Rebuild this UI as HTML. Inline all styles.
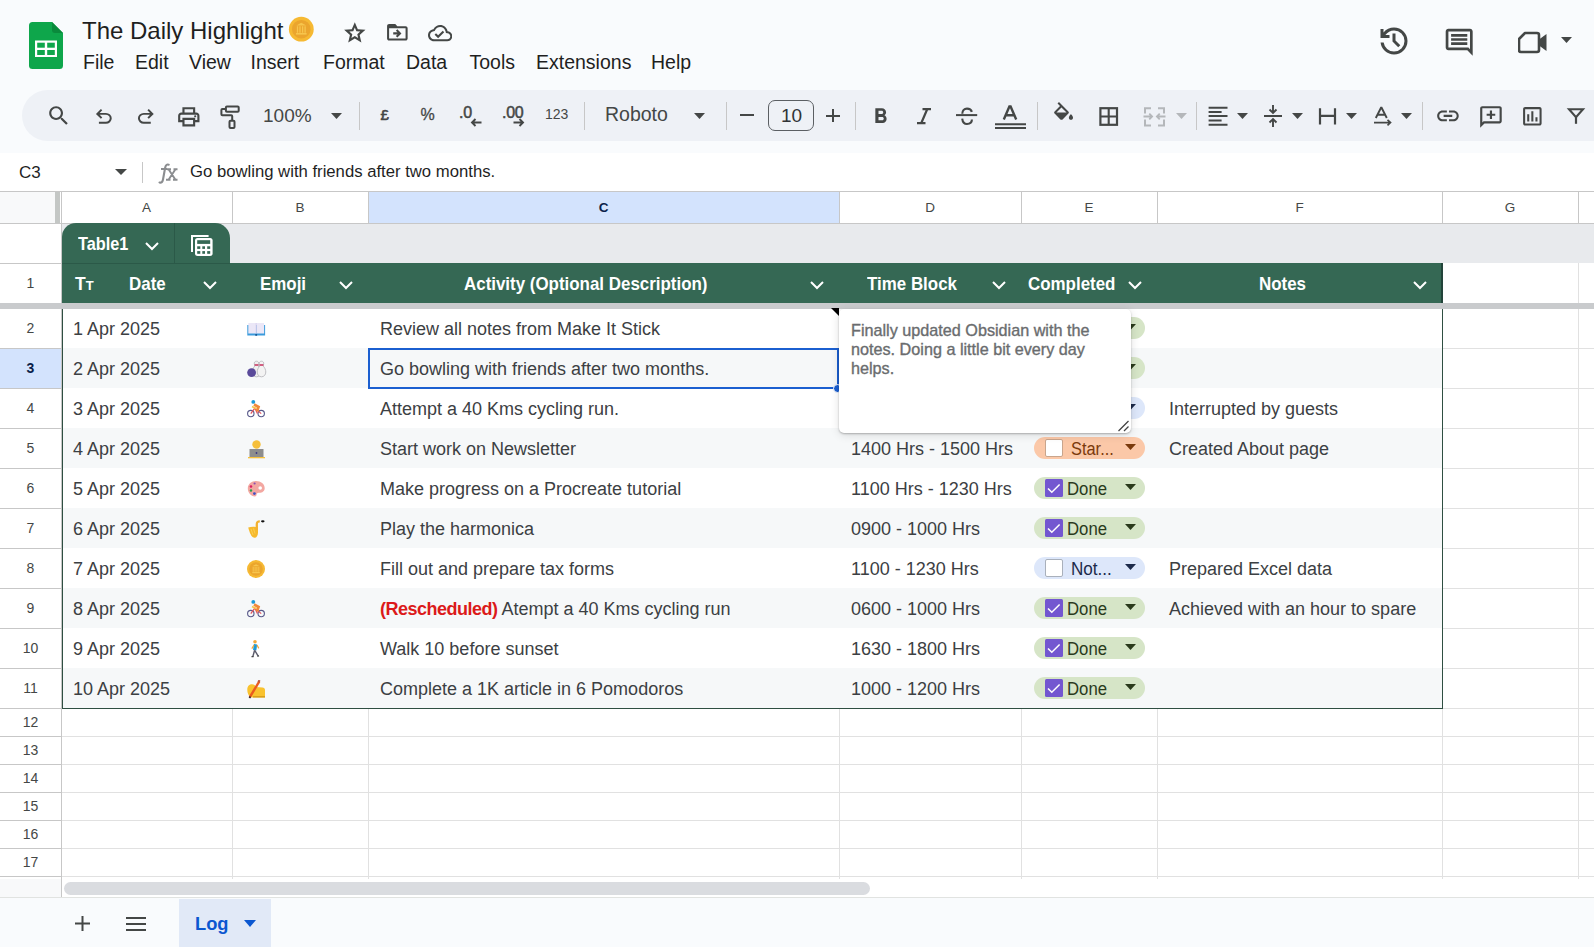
<!DOCTYPE html><html><head><meta charset="utf-8"><style>
html,body{margin:0;padding:0;}
body{width:1594px;height:947px;overflow:hidden;position:relative;background:#f9fbfd;font-family:"Liberation Sans", sans-serif;}
.t{position:absolute;white-space:nowrap;line-height:1;}
.a{position:absolute;}
</style></head><body>
<svg style="position:absolute;left:29px;top:22px" width="34" height="47" viewBox="0 0 34 47" >
<path d="M0 3.5 Q0 0 3.5 0 H23 L34 11 V43.5 Q34 47 30.5 47 H3.5 Q0 47 0 43.5 Z" fill="#0ea64b"/>
<path d="M23 0 L34 11 H26 Q23 11 23 8 Z" fill="#0a8a3c"/>
<rect x="6" y="18.5" width="22" height="16.5" fill="#fff"/>
<rect x="8.2" y="20.7" width="7.6" height="5" fill="#0ea64b"/>
<rect x="18.2" y="20.7" width="7.6" height="5" fill="#0ea64b"/>
<rect x="8.2" y="28" width="7.6" height="5" fill="#0ea64b"/>
<rect x="18.2" y="28" width="7.6" height="5" fill="#0ea64b"/>
</svg>
<div class="t" style="left:82px;top:19px;font-size:24px;color:#1f1f1f;font-weight:400;">The Daily Highlight</div>
<svg style="position:absolute;left:288px;top:16px" width="26" height="26" viewBox="0 0 26 26" ><circle cx="13.3" cy="13.2" r="12.4" fill="#f6b933"/><circle cx="13.3" cy="13.2" r="9.3" fill="#eba52d"/>
<path d="M8.3 9.5L13.3 6.8 18.3 9.5z" fill="#f7c54d"/><path d="M9.5 10.2v6.5M12 10.2v6.5M14.6 10.2v6.5M17.1 10.2v6.5" stroke="#f7c54d" stroke-width="1.3"/><rect x="8" y="17" width="10.6" height="1.6" fill="#f7c54d"/></svg>
<svg style="position:absolute;left:341.7px;top:20.3px" width="25.6" height="25.6" viewBox="0 -960 960 960"><path d="m354-287 126-76 126 77-33-144 111-96-146-13-58-136-58 135-146 13 111 97-33 143ZM233-120l65-281L80-590l288-25 112-265 112 265 288 25-218 189 65 281-247-149-247 149Zm247-350Z" fill="#444746"/></svg>
<svg style="position:absolute;left:384.9px;top:20.4px" width="24.7" height="24.7" viewBox="0 0 24 24"><path d="M20 6h-8l-2-2H4c-1.1 0-1.99.9-1.99 2L2 18c0 1.1.9 2 2 2h16c1.1 0 2-.9 2-2V8c0-1.1-.9-2-2-2zm0 12H4V8h16v10zM12.16 12H8v2h4.16l-1.59 1.59L11.99 17 16 13.01 11.99 9l-1.41 1.41L12.160 12z" fill="#444746"/></svg>
<svg style="position:absolute;left:427.8px;top:21px" width="24.3" height="24.3" viewBox="0 0 24 24"><path d="M19.35 10.04C18.67 6.59 15.64 4 12 4 9.11 4 6.6 5.64 5.35 8.04 2.34 8.360 0 10.91 0 14c0 3.31 2.69 6 6 6h13c2.76 0 5-2.24 5-5 0-2.64-2.05-4.78-4.65-4.96zM19 18H6c-2.21 0-4-1.79-4-4 0-2.05 1.53-3.76 3.56-3.97l1.07-.11.5-.95C8.08 7.14 9.94 6 12 6c2.62 0 4.88 1.86 5.39 4.43l.3 1.5 1.53.11c1.56.1 2.78 1.41 2.78 2.96 0 1.65-1.35 3-3 3zm-9-3.82l-2.09-2.09L6.5 13.5 10 17l6.01-6.01-1.41-1.41z" fill="#444746"/></svg>
<div class="t" style="left:83px;top:52.5px;font-size:19.5px;color:#1f1f1f;font-weight:400;">File</div>
<div class="t" style="left:135px;top:52.5px;font-size:19.5px;color:#1f1f1f;font-weight:400;">Edit</div>
<div class="t" style="left:189px;top:52.5px;font-size:19.5px;color:#1f1f1f;font-weight:400;">View</div>
<div class="t" style="left:250.5px;top:52.5px;font-size:19.5px;color:#1f1f1f;font-weight:400;">Insert</div>
<div class="t" style="left:323px;top:52.5px;font-size:19.5px;color:#1f1f1f;font-weight:400;">Format</div>
<div class="t" style="left:406px;top:52.5px;font-size:19.5px;color:#1f1f1f;font-weight:400;">Data</div>
<div class="t" style="left:469.5px;top:52.5px;font-size:19.5px;color:#1f1f1f;font-weight:400;">Tools</div>
<div class="t" style="left:536px;top:52.5px;font-size:19.5px;color:#1f1f1f;font-weight:400;">Extensions</div>
<div class="t" style="left:651px;top:52.5px;font-size:19.5px;color:#1f1f1f;font-weight:400;">Help</div>
<svg style="position:absolute;left:1375.5px;top:23.3px" width="36" height="36" viewBox="0 -960 960 960"><path d="M480-120q-138 0-240.5-91.5T122-440h82q14 104 92.5 172T480-200q117 0 198.5-81.5T760-480q0-117-81.5-198.5T480-760q-69 0-129 32t-101 88h110v80H120v-240h80v94q51-64 124.5-99T480-840q75 0 140.5 28.5t114 77q48.5 48.5 77 114T840-480q0 75-28.5 140.5t-77 114q-48.5 48.5-114 77T480-120Zm112-192L440-464v-216h80v184l128 128-56 56Z" fill="#444746"/></svg>
<svg style="position:absolute;left:1443.3px;top:25.9px" width="32.4" height="32.4" viewBox="0 0 24 24"><path d="M21.99 4c0-1.1-.89-2-1.99-2H4c-1.1 0-2 .9-2 2v12c0 1.1.9 2 2 2h14l4 4-.01-18zM20 4v13.17L18.83 16H4V4h16zM6 12h12v2H6zm0-3h12v2H6zm0-3h12v2H6z" fill="#444746"/></svg>
<svg style="position:absolute;left:1518px;top:31px" width="30" height="23" viewBox="0 0 30 23" ><path d="M7 2h12a2 2 0 0 1 2 2v15a2 2 0 0 1-2 2H3a2 2 0 0 1-2-2V8z" fill="none" stroke="#444746" stroke-width="2.6" stroke-linejoin="round"/><path d="M21 8.5l7.5-5.5v17l-7.5-5.5z" fill="#444746"/></svg>
<svg style="position:absolute;left:1561px;top:37px" width="11" height="6" viewBox="0 0 11 6" ><path d="M0 0h11L5.5 6z" fill="#444746"/></svg>
<div class="a" style="left:22px;top:90px;width:1620px;height:51px;border-radius:26px;background:#eef1f6"></div>
<svg style="position:absolute;left:45.6px;top:102.8px" width="25.5" height="25.5" viewBox="0 0 24 24"><path d="M15.5 14h-.79l-.28-.27C15.41 12.59 16 11.11 16 9.5 16 5.91 13.09 3 9.5 3S3 5.91 3 9.5 5.91 16 9.5 16c1.61 0 3.09-.59 4.23-1.57l.27.28v.79l5 4.99L20.49 19l-4.99-5zm-6 0C7.010 14 5 11.99 5 9.5S7.01 5 9.5 5 14 7.01 14 9.5 11.99 14 9.5 14z" fill="#444746"/></svg>
<svg style="position:absolute;left:91.75px;top:105.06px" width="23.7" height="23.7" viewBox="0 -960 960 960"><path d="M280-200v-80h284q63 0 109.5-40T720-420q0-60-46.5-100T564-560H312l104 104-56 56-200-200 200-200 56 56-104 104h252q97 0 166.5 63T800-420q0 94-69.5 157T564-200H280Z" fill="#444746"/></svg>
<svg style="position:absolute;left:134.05px;top:105.06px" width="23.7" height="23.7" viewBox="0 -960 960 960"><path d="M396-200q-97 0-166.5-63T160-420q0-94 69.5-157T396-640h252L544-744l56-56 200 200-200 200-56-56 104-104H396q-63 0-109.5 40T240-420q0 60 46.5 100T396-280h284v80H396Z" fill="#444746"/></svg>
<svg style="position:absolute;left:175.6px;top:104.0px" width="25.6" height="25.6" viewBox="0 -960 960 960"><path d="M640-640v-120H320v120h-80v-200h480v200h-80Zm-480 80h640-640Zm560 100q17 0 28.5-11.5T760-500q0-17-11.5-28.5T720-540q-17 0-28.5 11.5T680-500q0 17 11.5 28.5T720-460Zm-80 260v-160H320v160h320Zm80 80H240v-160H80v-240q0-51 35-85.5t85-34.5h560q51 0 85.5 34.5T880-520v240H720v160Zm80-240v-160q0-17-11.5-28.5T760-560H200q-17 0-28.5 11.5T160-520v160h80v-80h480v80h80Z" fill="#444746"/></svg>
<svg style="position:absolute;left:219px;top:104px" width="22" height="26" viewBox="0 0 22 26" ><rect x="6.9" y="2.5" width="12.8" height="5.3" rx="1" fill="none" stroke="#444746" stroke-width="2"/><path d="M6.9 5H3.4a1 1 0 0 0-1 1v4.3a1 1 0 0 0 1 1h8.8a1 1 0 0 1 1 1v4.3" fill="none" stroke="#444746" stroke-width="2"/><rect x="10.5" y="16.8" width="5" height="7.3" rx="1" fill="none" stroke="#444746" stroke-width="2"/></svg>
<div class="t" style="left:263px;top:106px;font-size:19px;color:#444746;font-weight:400;">100%</div>
<svg style="position:absolute;left:331px;top:113px" width="11" height="6" viewBox="0 0 11 6" ><path d="M0 0h11L5.5 6z" fill="#444746"/></svg>
<div class="a" style="left:359px;top:102px;width:1px;height:28px;background:#c7c7c7"></div>
<div class="a" style="left:584px;top:102px;width:1px;height:28px;background:#c7c7c7"></div>
<div class="a" style="left:726px;top:102px;width:1px;height:28px;background:#c7c7c7"></div>
<div class="a" style="left:855px;top:102px;width:1px;height:28px;background:#c7c7c7"></div>
<div class="a" style="left:1037px;top:102px;width:1px;height:28px;background:#c7c7c7"></div>
<div class="a" style="left:1196px;top:102px;width:1px;height:28px;background:#c7c7c7"></div>
<div class="a" style="left:1422px;top:102px;width:1px;height:28px;background:#c7c7c7"></div>
<div class="t" style="left:380.5px;top:106.5px;font-size:15px;color:#444746;font-weight:400;-webkit-text-stroke:0.6px #444746">£</div>
<div class="t" style="left:420.5px;top:106.5px;font-size:16px;color:#444746;font-weight:400;-webkit-text-stroke:0.3px #444746">%</div>
<div class="t" style="left:459px;top:104.5px;font-size:16px;color:#444746;font-weight:400;letter-spacing:-0.3px;-webkit-text-stroke:0.5px #444746">.0</div>
<svg style="position:absolute;left:470px;top:118px" width="12" height="9" viewBox="0 0 12 9" ><path d="M11.5 4.5H2M5.5 1L2 4.5 5.5 8" fill="none" stroke="#444746" stroke-width="1.9"/></svg>
<div class="t" style="left:502px;top:104.5px;font-size:16px;color:#444746;font-weight:400;letter-spacing:-0.3px;-webkit-text-stroke:0.5px #444746">.00</div>
<svg style="position:absolute;left:513px;top:118px" width="12" height="9" viewBox="0 0 12 9" ><path d="M0.5 4.5H10M6.5 1L10 4.5 6.5 8" fill="none" stroke="#444746" stroke-width="1.9"/></svg>
<div class="t" style="left:545px;top:107px;font-size:14px;color:#444746;font-weight:400;">123</div>
<div class="t" style="left:605px;top:105px;font-size:19.5px;color:#444746;font-weight:400;">Roboto</div>
<svg style="position:absolute;left:694px;top:113px" width="11" height="6" viewBox="0 0 11 6" ><path d="M0 0h11L5.5 6z" fill="#444746"/></svg>
<div class="a" style="left:740px;top:114px;width:14px;height:2px;background:#444746"></div>
<div class="a" style="left:768px;top:100px;width:46px;height:31px;border:1.3px solid #5b5f63;border-radius:7px;box-sizing:border-box"></div>
<div class="t" style="left:781px;top:106px;font-size:19px;color:#303336;font-weight:400;">10</div>
<div class="a" style="left:826px;top:114.5px;width:13.5px;height:2px;background:#444746"></div>
<div class="a" style="left:832px;top:109px;width:2px;height:13px;background:#444746"></div>
<svg style="position:absolute;left:868.45px;top:103.9px" width="25.2" height="25.2" viewBox="0 0 24 24"><path d="M15.6 10.79c.97-.67 1.65-1.77 1.65-2.79 0-2.26-1.75-4-4-4H7v14h7.04c2.09 0 3.71-1.7 3.71-3.79 0-1.52-.86-2.82-2.15-3.42zM10 6.5h3c.83 0 1.5.67 1.5 1.5s-.67 1.5-1.5 1.5h-3v-3zm3.5 9H10v-3h3.5c.83 0 1.5.67 1.5 1.5s-.67 1.5-1.5 1.5z" fill="#444746"/></svg>
<svg style="position:absolute;left:912px;top:104px" width="22" height="24" viewBox="0 0 22 24" ><path d="M10.5 5.2h8.5M5 19.2h8.5M15.2 5.2L9.2 19.2" fill="none" stroke="#444746" stroke-width="2.2"/></svg>
<svg style="position:absolute;left:954px;top:103px" width="25" height="24" viewBox="0 0 25 24" ><path d="M2 12.1h21.2" stroke="#444746" stroke-width="2"/><path d="M8.3 10.8C8.3 7.6 10.3 5.6 13 5.6c2.6 0 4.3 1.4 4.9 3.2M8.2 15.6c.4 3.4 2.4 5.4 4.8 5.4 2.8 0 4.9-1.6 4.9-4.4" fill="none" stroke="#444746" stroke-width="2.1"/></svg>
<svg style="position:absolute;left:994px;top:103px" width="32" height="26" viewBox="0 0 32 26" ><path d="M9.8 16.5L15.4 3.5h1.2L22.2 16.5M11.8 12.2h8.4" fill="none" stroke="#444746" stroke-width="2.4"/><path d="M1 21.2h31M1 25h31" stroke="#444746" stroke-width="1.9"/></svg>
<svg style="position:absolute;left:1050.85px;top:102px" width="25.2" height="25.2" viewBox="0 0 24 24"><path d="M16.56 8.94L7.62 0 6.21 1.41l2.38 2.38-5.15 5.15c-.59.59-.59 1.54 0 2.12l5.5 5.5c.29.29.68.44 1.06.44s.77-.15 1.06-.44l5.5-5.5c.59-.58.59-1.53 0-2.12zM5.21 10L10 5.21 14.79 10H5.21zM19 11.5s-2 2.17-2 3.5c0 1.1.9 2 2 2s2-.9 2-2c0-1.33-2-3.5-2-3.5z" fill="#444746"/></svg>
<svg style="position:absolute;left:1099px;top:107px" width="20" height="20" viewBox="0 0 20 20" ><rect x="1.4" y="1.2" width="16.6" height="16.6" fill="none" stroke="#444746" stroke-width="2.2"/><path d="M9.7 1.2v16.6M1.4 9.5h16.6" stroke="#444746" stroke-width="2.1"/></svg>
<svg style="position:absolute;left:1142px;top:105px" width="25" height="23" viewBox="0 0 25 23" ><path d="M9 3.2H3v5.3M3 14.5v6h6M16 3.2h6v5.3M22 14.5v6h-6" fill="none" stroke="#b4b7ba" stroke-width="2"/><path d="M1.5 11.5H10M7.3 8.7l2.8 2.8-2.8 2.8M23.5 11.5H15M17.7 8.7l-2.8 2.8 2.8 2.8" fill="none" stroke="#b4b7ba" stroke-width="1.8"/></svg>
<svg style="position:absolute;left:1176px;top:113px" width="11" height="6" viewBox="0 0 11 6" ><path d="M0 0h11L5.5 6z" fill="#b4b7ba"/></svg>
<svg style="position:absolute;left:1207px;top:105px" width="22" height="22" viewBox="0 0 22 22" ><path d="M1.6 2.8h18.9M1.6 6.9h13M1.6 11h18.9M1.6 15.4h13M1.6 19.7h18.9" stroke="#444746" stroke-width="2"/></svg>
<svg style="position:absolute;left:1237px;top:113px" width="11" height="6" viewBox="0 0 11 6" ><path d="M0 0h11L5.5 6z" fill="#444746"/></svg>
<svg style="position:absolute;left:1263px;top:104px" width="20" height="24" viewBox="0 0 20 24" ><path d="M1 12h18" stroke="#444746" stroke-width="2"/><path d="M10 1v7.5M6.5 5.5L10 9l3.5-3.5M10 23v-7.5M6.5 18.5L10 15l3.5 3.5" fill="none" stroke="#444746" stroke-width="1.9"/></svg>
<svg style="position:absolute;left:1292px;top:113px" width="11" height="6" viewBox="0 0 11 6" ><path d="M0 0h11L5.5 6z" fill="#444746"/></svg>
<svg style="position:absolute;left:1310px;top:100px" width="32" height="30" viewBox="0 0 32 30" ><path d="M10 8.3v16.1M25 8.3v16.1M10 15.8h15" stroke="#444746" stroke-width="2.2"/></svg>
<svg style="position:absolute;left:1346px;top:113px" width="11" height="6" viewBox="0 0 11 6" ><path d="M0 0h11L5.5 6z" fill="#444746"/></svg>
<svg style="position:absolute;left:1370px;top:100px" width="26" height="30" viewBox="0 0 26 30" ><path d="M5.8 18L11 7.8h0.6L16.8 18M7.6 14.8h7.4" fill="none" stroke="#444746" stroke-width="1.9"/><path d="M4 22.6h16.5M17.5 19.8l3 2.8-3 2.8" fill="none" stroke="#444746" stroke-width="1.7"/></svg>
<svg style="position:absolute;left:1401px;top:113px" width="11" height="6" viewBox="0 0 11 6" ><path d="M0 0h11L5.5 6z" fill="#444746"/></svg>
<svg style="position:absolute;left:1434.8px;top:103.1px" width="25.9" height="25.9" viewBox="0 0 24 24"><path d="M3.9 12c0-1.71 1.39-3.1 3.1-3.1h4V7H7c-2.76 0-5 2.24-5 5s2.24 5 5 5h4v-1.9H7c-1.71 0-3.1-1.39-3.1-3.1zM8 13h8v-2H8v2zm9-6h-4v1.9h4c1.71 0 3.1 1.39 3.1 3.1s-1.39 3.1-3.1 3.1h-4V17h4c2.76 0 5-2.24 5-5s-2.24-5-5-5z" fill="#444746"/></svg>
<svg style="position:absolute;left:1477.8px;top:103.8px" width="25.9" height="25.9" viewBox="0 -960 960 960"><path d="M440-400h80v-120h120v-80H520v-120h-80v120H320v80h120v120ZM80-80v-720q0-33 23.5-56.5T160-880h640q33 0 56.5 23.5T880-800v480q0 33-23.5 56.5T800-240H240L80-80Zm126-240h594v-480H160v525l46-45Zm-46 0v-480 480Z" fill="#444746"/></svg>
<svg style="position:absolute;left:1520.4px;top:103.9px" width="24.7" height="24.7" viewBox="0 0 24 24"><path d="M19 3H5c-1.1 0-2 .9-2 2v14c0 1.1.9 2 2 2h14c1.1 0 2-.9 2-2V5c0-1.1-.9-2-2-2zm0 16H5V5h14v14zM7 10h2v7H7zm4-3h2v10h-2zm4 6h2v4h-2z" fill="#444746"/></svg>
<svg style="position:absolute;left:1560px;top:100px" width="32" height="30" viewBox="0 0 32 30" ><path d="M9 9.2H23L16 17.2Z" fill="none" stroke="#444746" stroke-width="2.1" stroke-linejoin="miter"/><path d="M16 16.5V23.8" stroke="#444746" stroke-width="2.2"/></svg>
<div class="a" style="left:0;top:153px;width:1594px;height:39px;background:#fff"></div>
<div class="t" style="left:19px;top:164px;font-size:17px;color:#1f1f1f;font-weight:400;">C3</div>
<svg style="position:absolute;left:115px;top:169px" width="12" height="6" viewBox="0 0 12 6" ><path d="M0 0h12L6 6z" fill="#444746"/></svg>
<div class="a" style="left:142px;top:162px;width:1px;height:21px;background:#c7c7c7"></div>
<svg style="position:absolute;left:154.5px;top:160.5px" width="24" height="23" viewBox="0 0 24 23" ><path d="M4.5 21.5c2 0.5 3-0.5 3.5-3l2.2-12c0.5-2.5 1.7-3.3 3.5-2.8" fill="none" stroke="#8b8d90" stroke-width="2.1" stroke-linecap="round"/><path d="M6 8h6" stroke="#8b8d90" stroke-width="2"/><path d="M13.5 8.2l7 10.5M20.5 8.2l-7 10.5M12 8.2h4M18.5 8.2h4M11 18.7h4.5M18 18.7h4.5" fill="none" stroke="#8b8d90" stroke-width="1.9"/></svg>
<div class="t" style="left:190px;top:164px;font-size:16.7px;color:#1f1f1f;font-weight:400;">Go bowling with friends after two months.</div>
<div class="a" style="left:0;top:191px;width:1594px;height:707px;background:#fff"></div>
<div class="a" style="left:0;top:191px;width:1594px;height:1px;background:#c7c7c7"></div>
<div class="a" style="left:0;top:192px;width:55px;height:31px;background:#f8f9fa"></div>
<div class="a" style="left:55px;top:192px;width:5px;height:31px;background:#c4c7c5"></div>
<div class="a" style="left:368px;top:192px;width:471px;height:31px;background:#d3e3fd"></div>
<div class="a" style="left:0;top:223px;width:1594px;height:1px;background:#c7c7c7"></div>
<div class="a" style="left:61px;top:192px;width:1px;height:31px;background:#c7c7c7"></div>
<div class="t" style="left:61px;width:171px;text-align:center;top:201px;font-size:13.5px;color:#444746">A</div>
<div class="a" style="left:232px;top:192px;width:1px;height:31px;background:#c7c7c7"></div>
<div class="t" style="left:232px;width:136px;text-align:center;top:201px;font-size:13.5px;color:#444746">B</div>
<div class="a" style="left:368px;top:192px;width:1px;height:31px;background:#c7c7c7"></div>
<div class="t" style="left:368px;width:471px;text-align:center;top:201px;font-size:13.5px;color:#0b1f4a;font-weight:700">C</div>
<div class="a" style="left:839px;top:192px;width:1px;height:31px;background:#c7c7c7"></div>
<div class="t" style="left:839px;width:182px;text-align:center;top:201px;font-size:13.5px;color:#444746">D</div>
<div class="a" style="left:1021px;top:192px;width:1px;height:31px;background:#c7c7c7"></div>
<div class="t" style="left:1021px;width:136px;text-align:center;top:201px;font-size:13.5px;color:#444746">E</div>
<div class="a" style="left:1157px;top:192px;width:1px;height:31px;background:#c7c7c7"></div>
<div class="t" style="left:1157px;width:285px;text-align:center;top:201px;font-size:13.5px;color:#444746">F</div>
<div class="a" style="left:1442px;top:192px;width:1px;height:31px;background:#c7c7c7"></div>
<div class="t" style="left:1442px;width:136px;text-align:center;top:201px;font-size:13.5px;color:#444746">G</div>
<div class="a" style="left:1578px;top:192px;width:1px;height:31px;background:#c7c7c7"></div>
<div class="t" style="left:1578px;width:122px;text-align:center;top:201px;font-size:13.5px;color:#444746">H</div>
<div class="a" style="left:62px;top:224px;width:1532px;height:39px;background:#e8eaed"></div>
<div class="a" style="left:61px;top:223px;width:1px;height:656px;background:#c7c7c7"></div>
<div class="a" style="left:1443px;top:263px;width:151px;height:40px;background:#fff"></div>
<div class="a" style="left:0;top:263px;width:61px;height:1px;background:#c7c7c7"></div>
<div class="a" style="left:1578px;top:263px;width:1px;height:40px;background:#e1e1e1"></div>
<div class="t" style="left:0;width:61px;text-align:center;top:275.5px;font-size:14px;color:#444746;font-weight:400">1</div>
<div class="a" style="left:0;top:348px;width:61px;height:1px;background:#c7c7c7"></div>
<div class="t" style="left:0;width:61px;text-align:center;top:320.5px;font-size:14px;color:#444746;font-weight:400">2</div>
<div class="a" style="left:0;top:388px;width:61px;height:1px;background:#c7c7c7"></div>
<div class="a" style="left:0;top:349px;width:61px;height:39px;background:#d3e3fd"></div>
<div class="t" style="left:0;width:61px;text-align:center;top:360.5px;font-size:14px;color:#0b1f4a;font-weight:700">3</div>
<div class="a" style="left:0;top:428px;width:61px;height:1px;background:#c7c7c7"></div>
<div class="t" style="left:0;width:61px;text-align:center;top:400.5px;font-size:14px;color:#444746;font-weight:400">4</div>
<div class="a" style="left:0;top:468px;width:61px;height:1px;background:#c7c7c7"></div>
<div class="t" style="left:0;width:61px;text-align:center;top:440.5px;font-size:14px;color:#444746;font-weight:400">5</div>
<div class="a" style="left:0;top:508px;width:61px;height:1px;background:#c7c7c7"></div>
<div class="t" style="left:0;width:61px;text-align:center;top:480.5px;font-size:14px;color:#444746;font-weight:400">6</div>
<div class="a" style="left:0;top:548px;width:61px;height:1px;background:#c7c7c7"></div>
<div class="t" style="left:0;width:61px;text-align:center;top:520.5px;font-size:14px;color:#444746;font-weight:400">7</div>
<div class="a" style="left:0;top:588px;width:61px;height:1px;background:#c7c7c7"></div>
<div class="t" style="left:0;width:61px;text-align:center;top:560.5px;font-size:14px;color:#444746;font-weight:400">8</div>
<div class="a" style="left:0;top:628px;width:61px;height:1px;background:#c7c7c7"></div>
<div class="t" style="left:0;width:61px;text-align:center;top:600.5px;font-size:14px;color:#444746;font-weight:400">9</div>
<div class="a" style="left:0;top:668px;width:61px;height:1px;background:#c7c7c7"></div>
<div class="t" style="left:0;width:61px;text-align:center;top:640.5px;font-size:14px;color:#444746;font-weight:400">10</div>
<div class="a" style="left:0;top:708px;width:61px;height:1px;background:#c7c7c7"></div>
<div class="t" style="left:0;width:61px;text-align:center;top:680.5px;font-size:14px;color:#444746;font-weight:400">11</div>
<div class="a" style="left:0;top:736px;width:61px;height:1px;background:#c7c7c7"></div>
<div class="t" style="left:0;width:61px;text-align:center;top:714.5px;font-size:14px;color:#444746;font-weight:400">12</div>
<div class="a" style="left:0;top:764px;width:61px;height:1px;background:#c7c7c7"></div>
<div class="t" style="left:0;width:61px;text-align:center;top:742.5px;font-size:14px;color:#444746;font-weight:400">13</div>
<div class="a" style="left:0;top:792px;width:61px;height:1px;background:#c7c7c7"></div>
<div class="t" style="left:0;width:61px;text-align:center;top:770.5px;font-size:14px;color:#444746;font-weight:400">14</div>
<div class="a" style="left:0;top:820px;width:61px;height:1px;background:#c7c7c7"></div>
<div class="t" style="left:0;width:61px;text-align:center;top:798.5px;font-size:14px;color:#444746;font-weight:400">15</div>
<div class="a" style="left:0;top:848px;width:61px;height:1px;background:#c7c7c7"></div>
<div class="t" style="left:0;width:61px;text-align:center;top:826.5px;font-size:14px;color:#444746;font-weight:400">16</div>
<div class="a" style="left:0;top:876px;width:61px;height:1px;background:#c7c7c7"></div>
<div class="t" style="left:0;width:61px;text-align:center;top:854.5px;font-size:14px;color:#444746;font-weight:400">17</div>
<div class="a" style="left:0;top:904px;width:61px;height:1px;background:#c7c7c7"></div>
<div class="a" style="left:1443px;top:348px;width:151px;height:1px;background:#e1e1e1"></div>
<div class="a" style="left:1443px;top:388px;width:151px;height:1px;background:#e1e1e1"></div>
<div class="a" style="left:1443px;top:428px;width:151px;height:1px;background:#e1e1e1"></div>
<div class="a" style="left:1443px;top:468px;width:151px;height:1px;background:#e1e1e1"></div>
<div class="a" style="left:1443px;top:508px;width:151px;height:1px;background:#e1e1e1"></div>
<div class="a" style="left:1443px;top:548px;width:151px;height:1px;background:#e1e1e1"></div>
<div class="a" style="left:1443px;top:588px;width:151px;height:1px;background:#e1e1e1"></div>
<div class="a" style="left:1443px;top:628px;width:151px;height:1px;background:#e1e1e1"></div>
<div class="a" style="left:1443px;top:668px;width:151px;height:1px;background:#e1e1e1"></div>
<div class="a" style="left:1443px;top:708px;width:151px;height:1px;background:#e1e1e1"></div>
<div class="a" style="left:62px;top:736px;width:1532px;height:1px;background:#e1e1e1"></div>
<div class="a" style="left:62px;top:764px;width:1532px;height:1px;background:#e1e1e1"></div>
<div class="a" style="left:62px;top:792px;width:1532px;height:1px;background:#e1e1e1"></div>
<div class="a" style="left:62px;top:820px;width:1532px;height:1px;background:#e1e1e1"></div>
<div class="a" style="left:62px;top:848px;width:1532px;height:1px;background:#e1e1e1"></div>
<div class="a" style="left:62px;top:876px;width:1532px;height:1px;background:#e1e1e1"></div>
<div class="a" style="left:232px;top:708px;width:1px;height:171px;background:#e1e1e1"></div>
<div class="a" style="left:368px;top:708px;width:1px;height:171px;background:#e1e1e1"></div>
<div class="a" style="left:839px;top:708px;width:1px;height:171px;background:#e1e1e1"></div>
<div class="a" style="left:1021px;top:708px;width:1px;height:171px;background:#e1e1e1"></div>
<div class="a" style="left:1157px;top:708px;width:1px;height:171px;background:#e1e1e1"></div>
<div class="a" style="left:1578px;top:708px;width:1px;height:171px;background:#e1e1e1"></div>
<div class="a" style="left:1442px;top:308px;width:1px;height:571px;background:#e1e1e1"></div>
<div class="a" style="left:1578px;top:308px;width:1px;height:571px;background:#e1e1e1"></div>
<div class="a" style="left:62px;top:223px;width:168px;height:41px;background:#356854;border-radius:14px 15px 0 0"></div>
<div class="a" style="left:174px;top:223px;width:1px;height:40px;background:#2b5948"></div>
<div class="t" style="left:77.8px;top:235.6px;font-size:17.8px;color:#fff;font-weight:700;transform:scaleX(0.916);transform-origin:0 0">Table1</div>
<svg style="position:absolute;left:145px;top:242px" width="14" height="9" viewBox="0 0 14 9" ><path d="M1 1l6 6 6-6" fill="none" stroke="#fff" stroke-width="2"/></svg>
<svg style="position:absolute;left:188px;top:232px" width="28" height="28" viewBox="0 0 28 28" ><path d="M4 20V4.1h16.6" fill="none" stroke="#fff" stroke-width="2"/><rect x="7" y="6" width="17.6" height="18" rx="2.5" fill="#fff"/><rect x="9.2" y="8.2" width="13" height="3.7" fill="#356854"/><rect x="9.2" y="14.3" width="3.1" height="2.6" fill="#356854"/><rect x="14.3" y="14.3" width="2.7" height="2.6" fill="#356854"/><rect x="19.2" y="14.3" width="3" height="2.6" fill="#356854"/><rect x="9.2" y="19.1" width="3.1" height="2.7" fill="#356854"/><rect x="14.3" y="19.1" width="2.7" height="2.7" fill="#356854"/><rect x="19.2" y="19.1" width="3" height="2.7" fill="#356854"/></svg>
<div class="a" style="left:62px;top:263px;width:1381px;height:40px;background:#356854"></div>
<div class="a" style="left:62px;top:263px;width:168px;height:1px;background:#2b5948"></div>
<div class="t" style="left:75px;top:275.5px;font-size:17.5px;color:#fff;font-weight:700;">T<span style="font-size:13px">T</span></div>
<div class="t" style="left:129px;top:274.5px;font-size:18.4px;color:#fff;font-weight:700;transform:scaleX(0.92);transform-origin:0 0">Date</div>
<svg style="position:absolute;left:203px;top:281px" width="14" height="9" viewBox="0 0 14 9" ><path d="M1 1l6 6 6-6" fill="none" stroke="#fff" stroke-width="2"/></svg>
<div class="t" style="left:260px;top:274.5px;font-size:18.4px;color:#fff;font-weight:700;transform:scaleX(0.92);transform-origin:0 0">Emoji</div>
<svg style="position:absolute;left:339px;top:281px" width="14" height="9" viewBox="0 0 14 9" ><path d="M1 1l6 6 6-6" fill="none" stroke="#fff" stroke-width="2"/></svg>
<div class="t" style="left:464px;top:274.5px;font-size:18.4px;color:#fff;font-weight:700;transform:scaleX(0.92);transform-origin:0 0">Activity (Optional Description)</div>
<svg style="position:absolute;left:810px;top:281px" width="14" height="9" viewBox="0 0 14 9" ><path d="M1 1l6 6 6-6" fill="none" stroke="#fff" stroke-width="2"/></svg>
<div class="t" style="left:867px;top:274.5px;font-size:18.4px;color:#fff;font-weight:700;transform:scaleX(0.92);transform-origin:0 0">Time Block</div>
<svg style="position:absolute;left:992px;top:281px" width="14" height="9" viewBox="0 0 14 9" ><path d="M1 1l6 6 6-6" fill="none" stroke="#fff" stroke-width="2"/></svg>
<div class="t" style="left:1028px;top:274.5px;font-size:18.4px;color:#fff;font-weight:700;transform:scaleX(0.92);transform-origin:0 0">Completed</div>
<svg style="position:absolute;left:1128px;top:281px" width="14" height="9" viewBox="0 0 14 9" ><path d="M1 1l6 6 6-6" fill="none" stroke="#fff" stroke-width="2"/></svg>
<div class="t" style="left:1259px;top:274.5px;font-size:18.4px;color:#fff;font-weight:700;transform:scaleX(0.92);transform-origin:0 0">Notes</div>
<svg style="position:absolute;left:1413px;top:281px" width="14" height="9" viewBox="0 0 14 9" ><path d="M1 1l6 6 6-6" fill="none" stroke="#fff" stroke-width="2"/></svg>
<div class="a" style="left:1441px;top:263px;width:2px;height:40px;background:#22443a"></div>
<div class="a" style="left:63px;top:308px;width:1379px;height:40px;background:#fff"></div>
<div class="a" style="left:63px;top:348px;width:1379px;height:40px;background:#f6f8f9"></div>
<div class="a" style="left:63px;top:388px;width:1379px;height:40px;background:#fff"></div>
<div class="a" style="left:63px;top:428px;width:1379px;height:40px;background:#f6f8f9"></div>
<div class="a" style="left:63px;top:468px;width:1379px;height:40px;background:#fff"></div>
<div class="a" style="left:63px;top:508px;width:1379px;height:40px;background:#f6f8f9"></div>
<div class="a" style="left:63px;top:548px;width:1379px;height:40px;background:#fff"></div>
<div class="a" style="left:63px;top:588px;width:1379px;height:40px;background:#f6f8f9"></div>
<div class="a" style="left:63px;top:628px;width:1379px;height:40px;background:#fff"></div>
<div class="a" style="left:63px;top:668px;width:1379px;height:40px;background:#f6f8f9"></div>
<div class="a" style="left:0;top:303px;width:1594px;height:6px;background:#c9cbcd"></div>
<div class="a" style="left:62px;top:309px;width:1381px;height:400px;border:1px solid #2f4f42;border-top:none;box-sizing:border-box"></div>
<div class="t" style="left:73px;top:320px;font-size:18px;color:#3c4043;font-weight:400;">1 Apr 2025</div>
<svg style="position:absolute;left:247px;top:320px" width="20" height="20" viewBox="0 0 20 20"><path d="M0.3 5h17.8v10.5H0.3z" fill="#3b9bdc"/><rect x="1.3" y="3" width="7.7" height="10.5" fill="#ebe7f7"/><rect x="9.4" y="3" width="7.7" height="10.5" fill="#ebe7f7"/><path d="M9.2 3v10.5" stroke="#cfc8ea" stroke-width="0.8"/><rect x="8.3" y="14" width="1.8" height="1.8" fill="#1c5a94"/></svg>
<div class="t" style="left:380px;top:320px;font-size:18px;color:#3c4043;font-weight:400;">Review all notes from Make It Stick</div>
<div class="a" style="left:1034px;top:317px;width:111px;height:22px;border-radius:11px;background:#d6e5c7"></div>
<svg style="position:absolute;left:1045px;top:319px" width="18" height="18" viewBox="0 0 18 18" ><rect x="0" y="0" width="18" height="18" rx="1.5" fill="#7357d0"/><path d="M3 9.5l3.8 3.8 7.8-7.8" fill="none" stroke="#fff" stroke-width="1.5"/></svg>
<div class="t" style="left:1067px;top:319.5px;font-size:18px;color:#2a3a1c;font-weight:400;transform:scaleX(0.93);transform-origin:0 0">Done</div>
<svg style="position:absolute;left:1125px;top:324px" width="11" height="6" viewBox="0 0 11 6" ><path d="M0 0h11L5.5 6z" fill="#2a3a1c"/></svg>
<div class="t" style="left:73px;top:360px;font-size:18px;color:#3c4043;font-weight:400;">2 Apr 2025</div>
<svg style="position:absolute;left:247px;top:360px" width="20" height="20" viewBox="0 0 20 20"><path d="M9.5 1.2c-1.6 0-2.4 1.2-2.2 2.6l0.5 2.2c-1.5 1.6-2.6 3.8-2.6 6 0 2.8 1.8 4.8 4.3 4.8s4.3-2 4.3-4.8c0-2.2-1.1-4.4-2.6-6l0.5-2.2c0.2-1.4-0.6-2.6-2.2-2.6z" fill="#efefef" stroke="#b9b9bd" stroke-width="0.9"/><path d="M14.5 1.2c-1.6 0-2.4 1.2-2.2 2.6l0.5 2.2c-1.5 1.6-2.6 3.8-2.6 6 0 2.8 1.8 4.8 4.3 4.8s4.3-2 4.3-4.8c0-2.2-1.1-4.4-2.6-6l0.5-2.2c0.2-1.4-0.6-2.6-2.2-2.6z" fill="#f3f3f3" stroke="#b9b9bd" stroke-width="0.9"/><path d="M7.6 5h3.8M12.6 5h3.8" stroke="#c8315e" stroke-width="1.5"/><circle cx="4.6" cy="12.6" r="4.4" fill="#5a4a9a"/></svg>
<div class="t" style="left:380px;top:360px;font-size:18px;color:#3c4043;font-weight:400;">Go bowling with friends after two months.</div>
<div class="a" style="left:1034px;top:357px;width:111px;height:22px;border-radius:11px;background:#d6e5c7"></div>
<svg style="position:absolute;left:1045px;top:359px" width="18" height="18" viewBox="0 0 18 18" ><rect x="0" y="0" width="18" height="18" rx="1.5" fill="#7357d0"/><path d="M3 9.5l3.8 3.8 7.8-7.8" fill="none" stroke="#fff" stroke-width="1.5"/></svg>
<div class="t" style="left:1067px;top:359.5px;font-size:18px;color:#2a3a1c;font-weight:400;transform:scaleX(0.93);transform-origin:0 0">Done</div>
<svg style="position:absolute;left:1125px;top:364px" width="11" height="6" viewBox="0 0 11 6" ><path d="M0 0h11L5.5 6z" fill="#2a3a1c"/></svg>
<div class="t" style="left:73px;top:400px;font-size:18px;color:#3c4043;font-weight:400;">3 Apr 2025</div>
<svg style="position:absolute;left:247px;top:400px" width="20" height="20" viewBox="0 0 20 20"><circle cx="3.8" cy="13.6" r="3.2" fill="none" stroke="#59598a" stroke-width="1.1"/><circle cx="14.2" cy="13.6" r="3.2" fill="none" stroke="#59598a" stroke-width="1.1"/><path d="M3.8 13.6l4-5.5 6.4 5.5M7.8 8.1l2.6 5.5" fill="none" stroke="#e2525c" stroke-width="1.2"/><circle cx="6.3" cy="1.9" r="1.9" fill="#1f9bd8"/><path d="M7 4.5l4.5 2.4-1.5 4.5" fill="none" stroke="#f0883a" stroke-width="2.8"/><path d="M5 6.5l4.5 2.2" stroke="#f8c54c" stroke-width="1.8"/></svg>
<div class="t" style="left:380px;top:400px;font-size:18px;color:#3c4043;font-weight:400;">Attempt a 40 Kms cycling run.</div>
<div class="t" style="left:1169px;top:400px;font-size:18px;color:#3c4043;font-weight:400;">Interrupted by guests</div>
<div class="a" style="left:1034px;top:397px;width:111px;height:22px;border-radius:11px;background:#dde7fa"></div>
<div class="a" style="left:1045px;top:399px;width:18px;height:18px;border-radius:2px;background:#fff;box-sizing:border-box;border:1px solid #a9b0bb"></div>
<div class="t" style="left:1071px;top:399.5px;font-size:18px;color:#1c2a4a;font-weight:400;transform:scaleX(0.95);transform-origin:0 0">Not...</div>
<svg style="position:absolute;left:1125px;top:404px" width="11" height="6" viewBox="0 0 11 6" ><path d="M0 0h11L5.5 6z" fill="#1c2a4a"/></svg>
<div class="t" style="left:73px;top:440px;font-size:18px;color:#3c4043;font-weight:400;">4 Apr 2025</div>
<svg style="position:absolute;left:247px;top:440px" width="20" height="20" viewBox="0 0 20 20"><circle cx="9.5" cy="4.5" r="4.2" fill="#f6bf3a"/><rect x="2.5" y="9" width="14" height="8" fill="#8d8d8d"/><rect x="1" y="17" width="17" height="1.3" fill="#f6c03b"/><circle cx="9.5" cy="13" r="0.9" fill="#3a3880"/></svg>
<div class="t" style="left:380px;top:440px;font-size:18px;color:#3c4043;font-weight:400;">Start work on Newsletter</div>
<div class="t" style="left:851px;top:440px;font-size:18px;color:#3c4043;font-weight:400;">1400 Hrs - 1500 Hrs</div>
<div class="t" style="left:1169px;top:440px;font-size:18px;color:#3c4043;font-weight:400;">Created About page</div>
<div class="a" style="left:1034px;top:437px;width:111px;height:22px;border-radius:11px;background:#fbc8a8"></div>
<div class="a" style="left:1045px;top:439px;width:18px;height:18px;border-radius:2px;background:#fff;box-sizing:border-box;border:1px solid #c9a58c"></div>
<div class="t" style="left:1071px;top:439.5px;font-size:18px;color:#7a3a0c;font-weight:400;transform:scaleX(0.91);transform-origin:0 0">Star...</div>
<svg style="position:absolute;left:1125px;top:444px" width="11" height="6" viewBox="0 0 11 6" ><path d="M0 0h11L5.5 6z" fill="#7a3a0c"/></svg>
<div class="t" style="left:73px;top:480px;font-size:18px;color:#3c4043;font-weight:400;">5 Apr 2025</div>
<svg style="position:absolute;left:247px;top:480px" width="20" height="20" viewBox="0 0 20 20"><path d="M9 1C4.5 1 0.8 4.2 0.8 8.4c0 4 3.2 8 7 8 1.5 0 1.8-1 1.8-1.8 0-1.2 1.2-2 2.5-1.8 2.6.3 5.6-1.6 5.6-4.6C17.7 4 13.8 1 9 1z" fill="#f3a7a1"/><circle cx="13.2" cy="8" r="1.8" fill="#fff"/><circle cx="4" cy="6.5" r="1.3" fill="#d81e62"/><circle cx="7.6" cy="3.5" r="1.1" fill="#8a4fb0"/><circle cx="4" cy="10.5" r="1.2" fill="#2aa14a"/><circle cx="7.4" cy="13.6" r="1.4" fill="#3f4fc4"/></svg>
<div class="t" style="left:380px;top:480px;font-size:18px;color:#3c4043;font-weight:400;">Make progress on a Procreate tutorial</div>
<div class="t" style="left:851px;top:480px;font-size:18px;color:#3c4043;font-weight:400;">1100 Hrs - 1230 Hrs</div>
<div class="a" style="left:1034px;top:477px;width:111px;height:22px;border-radius:11px;background:#d6e5c7"></div>
<svg style="position:absolute;left:1045px;top:479px" width="18" height="18" viewBox="0 0 18 18" ><rect x="0" y="0" width="18" height="18" rx="1.5" fill="#7357d0"/><path d="M3 9.5l3.8 3.8 7.8-7.8" fill="none" stroke="#fff" stroke-width="1.5"/></svg>
<div class="t" style="left:1067px;top:479.5px;font-size:18px;color:#2a3a1c;font-weight:400;transform:scaleX(0.93);transform-origin:0 0">Done</div>
<svg style="position:absolute;left:1125px;top:484px" width="11" height="6" viewBox="0 0 11 6" ><path d="M0 0h11L5.5 6z" fill="#2a3a1c"/></svg>
<div class="t" style="left:73px;top:520px;font-size:18px;color:#3c4043;font-weight:400;">6 Apr 2025</div>
<svg style="position:absolute;left:247px;top:520px" width="20" height="20" viewBox="0 0 20 20"><path d="M1.2 7.6C3.2 6.8 6 6.4 8.5 6.9L11 7.4V12.2C11 15.6 9.6 17.8 7.6 17.8 5.2 17.8 3.2 15 1.2 7.6Z" fill="#f6b92c"/><path d="M9.8 10V4.2C9.8 2.3 10.8 1.3 12.8 1.3" fill="none" stroke="#f3b12f" stroke-width="2.3"/><ellipse cx="15.8" cy="1.3" rx="1.8" ry="1.1" fill="#111"/><path d="M4 9l2 6M6.5 8.5l1.5 5" stroke="#fbd35a" stroke-width="0.8"/></svg>
<div class="t" style="left:380px;top:520px;font-size:18px;color:#3c4043;font-weight:400;">Play the harmonica</div>
<div class="t" style="left:851px;top:520px;font-size:18px;color:#3c4043;font-weight:400;">0900 - 1000 Hrs</div>
<div class="a" style="left:1034px;top:517px;width:111px;height:22px;border-radius:11px;background:#d6e5c7"></div>
<svg style="position:absolute;left:1045px;top:519px" width="18" height="18" viewBox="0 0 18 18" ><rect x="0" y="0" width="18" height="18" rx="1.5" fill="#7357d0"/><path d="M3 9.5l3.8 3.8 7.8-7.8" fill="none" stroke="#fff" stroke-width="1.5"/></svg>
<div class="t" style="left:1067px;top:519.5px;font-size:18px;color:#2a3a1c;font-weight:400;transform:scaleX(0.93);transform-origin:0 0">Done</div>
<svg style="position:absolute;left:1125px;top:524px" width="11" height="6" viewBox="0 0 11 6" ><path d="M0 0h11L5.5 6z" fill="#2a3a1c"/></svg>
<div class="t" style="left:73px;top:560px;font-size:18px;color:#3c4043;font-weight:400;">7 Apr 2025</div>
<svg style="position:absolute;left:247px;top:560px" width="20" height="20" viewBox="0 0 20 20"><circle cx="9" cy="9" r="9" fill="#f6b933"/><circle cx="9" cy="9" r="6.8" fill="#eba52d"/><path d="M5.4 6.3L9 4.3 12.6 6.3z" fill="#f7c54d"/><path d="M6.2 7v4.8M8.1 7v4.8M9.9 7v4.8M11.8 7v4.8" stroke="#f7c54d" stroke-width="1"/><rect x="5.2" y="12" width="7.6" height="1.2" fill="#f7c54d"/></svg>
<div class="t" style="left:380px;top:560px;font-size:18px;color:#3c4043;font-weight:400;">Fill out and prepare tax forms</div>
<div class="t" style="left:851px;top:560px;font-size:18px;color:#3c4043;font-weight:400;">1100 - 1230 Hrs</div>
<div class="t" style="left:1169px;top:560px;font-size:18px;color:#3c4043;font-weight:400;">Prepared Excel data</div>
<div class="a" style="left:1034px;top:557px;width:111px;height:22px;border-radius:11px;background:#dde7fa"></div>
<div class="a" style="left:1045px;top:559px;width:18px;height:18px;border-radius:2px;background:#fff;box-sizing:border-box;border:1px solid #a9b0bb"></div>
<div class="t" style="left:1071px;top:559.5px;font-size:18px;color:#1c2a4a;font-weight:400;transform:scaleX(0.95);transform-origin:0 0">Not...</div>
<svg style="position:absolute;left:1125px;top:564px" width="11" height="6" viewBox="0 0 11 6" ><path d="M0 0h11L5.5 6z" fill="#1c2a4a"/></svg>
<div class="t" style="left:73px;top:600px;font-size:18px;color:#3c4043;font-weight:400;">8 Apr 2025</div>
<svg style="position:absolute;left:247px;top:600px" width="20" height="20" viewBox="0 0 20 20"><circle cx="3.8" cy="13.6" r="3.2" fill="none" stroke="#59598a" stroke-width="1.1"/><circle cx="14.2" cy="13.6" r="3.2" fill="none" stroke="#59598a" stroke-width="1.1"/><path d="M3.8 13.6l4-5.5 6.4 5.5M7.8 8.1l2.6 5.5" fill="none" stroke="#e2525c" stroke-width="1.2"/><circle cx="6.3" cy="1.9" r="1.9" fill="#1f9bd8"/><path d="M7 4.5l4.5 2.4-1.5 4.5" fill="none" stroke="#f0883a" stroke-width="2.8"/><path d="M5 6.5l4.5 2.2" stroke="#f8c54c" stroke-width="1.8"/></svg>
<div class="t" style="left:380px;top:600px;font-size:18px;color:#3c4043;font-weight:400;"><span style="color:#dc1a1a;font-weight:700;letter-spacing:-0.5px">(Rescheduled)</span> Atempt a 40 Kms cycling run</div>
<div class="t" style="left:851px;top:600px;font-size:18px;color:#3c4043;font-weight:400;">0600 - 1000 Hrs</div>
<div class="t" style="left:1169px;top:600px;font-size:18px;color:#3c4043;font-weight:400;">Achieved with an hour to spare</div>
<div class="a" style="left:1034px;top:597px;width:111px;height:22px;border-radius:11px;background:#d6e5c7"></div>
<svg style="position:absolute;left:1045px;top:599px" width="18" height="18" viewBox="0 0 18 18" ><rect x="0" y="0" width="18" height="18" rx="1.5" fill="#7357d0"/><path d="M3 9.5l3.8 3.8 7.8-7.8" fill="none" stroke="#fff" stroke-width="1.5"/></svg>
<div class="t" style="left:1067px;top:599.5px;font-size:18px;color:#2a3a1c;font-weight:400;transform:scaleX(0.93);transform-origin:0 0">Done</div>
<svg style="position:absolute;left:1125px;top:604px" width="11" height="6" viewBox="0 0 11 6" ><path d="M0 0h11L5.5 6z" fill="#2a3a1c"/></svg>
<div class="t" style="left:73px;top:640px;font-size:18px;color:#3c4043;font-weight:400;">9 Apr 2025</div>
<svg style="position:absolute;left:247px;top:640px" width="20" height="20" viewBox="0 0 20 20"><circle cx="8" cy="1.8" r="1.8" fill="#f2a93b"/><path d="M8.5 4.2l-0.8 6" stroke="#1e9ad6" stroke-width="3.3"/><path d="M7.6 10.2l-1.8 6.5M7.6 10.2l3.6 6" fill="none" stroke="#5c5c6c" stroke-width="1.4"/><path d="M7 5l-2.2 3.6M10 5l1.8 3.4" stroke="#f2a93b" stroke-width="1.2"/><path d="M4.5 16.7h2M10.5 16.4l1.5-0.6" stroke="#444" stroke-width="1.2"/></svg>
<div class="t" style="left:380px;top:640px;font-size:18px;color:#3c4043;font-weight:400;">Walk 10 before sunset</div>
<div class="t" style="left:851px;top:640px;font-size:18px;color:#3c4043;font-weight:400;">1630 - 1800 Hrs</div>
<div class="a" style="left:1034px;top:637px;width:111px;height:22px;border-radius:11px;background:#d6e5c7"></div>
<svg style="position:absolute;left:1045px;top:639px" width="18" height="18" viewBox="0 0 18 18" ><rect x="0" y="0" width="18" height="18" rx="1.5" fill="#7357d0"/><path d="M3 9.5l3.8 3.8 7.8-7.8" fill="none" stroke="#fff" stroke-width="1.5"/></svg>
<div class="t" style="left:1067px;top:639.5px;font-size:18px;color:#2a3a1c;font-weight:400;transform:scaleX(0.93);transform-origin:0 0">Done</div>
<svg style="position:absolute;left:1125px;top:644px" width="11" height="6" viewBox="0 0 11 6" ><path d="M0 0h11L5.5 6z" fill="#2a3a1c"/></svg>
<div class="t" style="left:73px;top:680px;font-size:18px;color:#3c4043;font-weight:400;">10 Apr 2025</div>
<svg style="position:absolute;left:247px;top:680px" width="20" height="20" viewBox="0 0 20 20"><path d="M0.3 9.5C0.3 6 2.5 4.2 5 4.2 7 4.2 8.5 5.5 9 7L15.5 7.5C17 7.6 18 8.5 18 10V17.4H5.5C2.5 17.4 0.3 14 0.3 9.5Z" fill="#f9c22e"/><path d="M6 16.8H18" stroke="#d49b1c" stroke-width="1.4"/><path d="M2.8 17.2L12.3 1.4" stroke="#ea5a1e" stroke-width="2.4"/><path d="M11.4 2L12.6 0.2" stroke="#b9553c" stroke-width="2.2"/><path d="M2.4 18l1-1.6" stroke="#3a2a2a" stroke-width="1.8"/></svg>
<div class="t" style="left:380px;top:680px;font-size:18px;color:#3c4043;font-weight:400;">Complete a 1K article in 6 Pomodoros</div>
<div class="t" style="left:851px;top:680px;font-size:18px;color:#3c4043;font-weight:400;">1000 - 1200 Hrs</div>
<div class="a" style="left:1034px;top:677px;width:111px;height:22px;border-radius:11px;background:#d6e5c7"></div>
<svg style="position:absolute;left:1045px;top:679px" width="18" height="18" viewBox="0 0 18 18" ><rect x="0" y="0" width="18" height="18" rx="1.5" fill="#7357d0"/><path d="M3 9.5l3.8 3.8 7.8-7.8" fill="none" stroke="#fff" stroke-width="1.5"/></svg>
<div class="t" style="left:1067px;top:679.5px;font-size:18px;color:#2a3a1c;font-weight:400;transform:scaleX(0.93);transform-origin:0 0">Done</div>
<svg style="position:absolute;left:1125px;top:684px" width="11" height="6" viewBox="0 0 11 6" ><path d="M0 0h11L5.5 6z" fill="#2a3a1c"/></svg>
<div class="a" style="left:368px;top:348px;width:471px;height:41px;border:2px solid #1b5fd0;box-sizing:border-box"></div>
<div class="a" style="left:833px;top:384px;width:9px;height:9px;border-radius:50%;background:#1b5fd0;border:1px solid #fff;box-sizing:border-box"></div>
<svg style="position:absolute;left:831px;top:308px" width="8" height="8" viewBox="0 0 8 8" ><path d="M0 0h8v8z" fill="#000"/></svg>
<div class="a" style="left:839px;top:309px;width:292px;height:124px;background:#fff;border-radius:5px;box-shadow:0 1px 2px rgba(0,0,0,0.25),0 2px 10px rgba(0,0,0,0.12)"></div>
<div class="a" style="left:851px;top:321px;width:270px;font-size:16.2px;line-height:19px;color:#6a6c6e;font-weight:400;-webkit-text-stroke:0.35px #6a6c6e">Finally updated Obsidian with the<br>notes. Doing a little bit every day<br>helps.</div>
<svg style="position:absolute;left:1117px;top:420px" width="13" height="12" viewBox="0 0 13 12" ><path d="M1.5 11L11.5 1M7 11l4.5-4.5" stroke="#444" stroke-width="1.3"/></svg>
<div class="a" style="left:0;top:879px;width:61px;height:18px;background:#f8f9fa"></div>
<div class="a" style="left:62px;top:879px;width:1532px;height:18px;background:#fff"></div>
<div class="a" style="left:61px;top:879px;width:1px;height:18px;background:#c7c7c7"></div>
<div class="a" style="left:64px;top:882px;width:806px;height:13px;border-radius:7px;background:#dadce0"></div>
<div class="a" style="left:0;top:897px;width:1594px;height:1px;background:#e1e3e1"></div>
<div class="a" style="left:0;top:898px;width:1594px;height:49px;background:#f9fbfd"></div>
<svg style="position:absolute;left:75px;top:916px" width="15" height="15" viewBox="0 0 15 15" ><path d="M7.5 0v15M0 7.5h15" stroke="#444746" stroke-width="2"/></svg>
<svg style="position:absolute;left:126px;top:917px" width="20" height="14" viewBox="0 0 20 14" ><path d="M0 1h20M0 7h20M0 13h20" stroke="#444746" stroke-width="2.2"/></svg>
<div class="a" style="left:179px;top:899px;width:92px;height:48px;background:#e1e9f7"></div>
<div class="t" style="left:195px;top:914.5px;font-size:18.3px;color:#0b57d0;font-weight:700;">Log</div>
<svg style="position:absolute;left:244px;top:920px" width="12" height="7" viewBox="0 0 12 7" ><path d="M0 0h12L6 7z" fill="#0b57d0"/></svg>
</body></html>
